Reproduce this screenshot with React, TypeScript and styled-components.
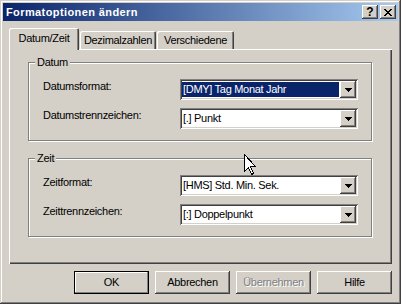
import styled, { createGlobalStyle } from "styled-components";

const GlobalStyle = createGlobalStyle`
  html, body {
    margin: 0;
    padding: 0;
    background: #d4d0c8;
  }
  body {
    font-family: "Liberation Sans", Arial, sans-serif;
    font-size: 11px;
    letter-spacing: -0.3px;
    color: #000;
  }
`;

const raised = `
  box-shadow: inset -1px -1px #404040, inset 1px 1px #fff,
    inset -2px -2px #808080, inset 2px 2px #d4d0c8;
`;

const Window = styled.div`
  position: relative;
  box-sizing: border-box;
  width: 401px;
  height: 304px;
  padding: 3px;
  background: #d4d0c8;
  box-shadow: inset -1px -1px #404040, inset 1px 1px #d4d0c8,
    inset -2px -2px #808080, inset 2px 2px #fff;
  display: flex;
  flex-direction: column;
`;

const TitleBar = styled.div`
  height: 18px;
  display: flex;
  align-items: center;
  padding: 0 2px 0 3px;
  background: linear-gradient(to right, #0a246a, #a6caf0);
  color: #fff;
`;

const Title = styled.div`
  flex: 1;
  font-weight: bold;
  font-size: 11px;
  letter-spacing: 0.4px;
  line-height: 18px;
`;

const CaptionButton = styled.div`
  box-sizing: border-box;
  width: 16px;
  height: 14px;
  margin-left: 2px;
  background: #d4d0c8;
  color: #000;
  display: flex;
  align-items: center;
  justify-content: center;
  font-weight: bold;
  font-size: 12px;
  letter-spacing: 0;
  line-height: 14px;
  ${raised}
`;

const Client = styled.div`
  flex: 1;
  display: flex;
  flex-direction: column;
  padding: 7px 6px 7px 6px;
`;

const TabStrip = styled.div`
  height: 21px;
  display: flex;
  align-items: flex-end;
`;

const Tab = styled.div<{ $active?: boolean; $width: number }>`
  position: relative;
  z-index: ${(p) => (p.$active ? 1 : 0)};
  box-sizing: border-box;
  width: ${(p) => p.$width}px;
  height: ${(p) => (p.$active ? 22 : 18)}px;
  margin-bottom: ${(p) => (p.$active ? -1 : 0)}px;
  margin-left: ${(p) => (p.$active ? 0 : 1)}px;
  background: #d4d0c8;
  border-radius: 2px 2px 0 0;
  box-shadow: inset 1px 1px #fff, inset -1px 0 #404040, inset -2px 0 #808080;
  display: flex;
  justify-content: center;
  padding-top: ${(p) => (p.$active ? 4 : 3)}px;
  line-height: 13px;
`;

const Panel = styled.div`
  box-sizing: border-box;
  height: 215px;
  padding: 13px 20px 0 19px;
  background: #d4d0c8;
  box-shadow: inset 1px 1px #fff, inset -1px -1px #404040,
    inset -2px -2px #808080;
  display: flex;
  flex-direction: column;
  gap: 17px;
`;

const GroupBox = styled.div`
  position: relative;
  box-sizing: border-box;
  height: 79px;
  border: 1px solid #808080;
  box-shadow: inset 1px 1px #fff, 1px 1px #fff;
  padding: 16px 13px 0 14px;
  display: flex;
  flex-direction: column;
  gap: 8px;
`;

const GroupCaption = styled.div`
  position: absolute;
  top: -7px;
  left: 6px;
  padding: 0 2px;
  background: #d4d0c8;
  line-height: 13px;
`;

const Row = styled.div`
  height: 21px;
  display: flex;
  justify-content: space-between;
  align-items: flex-start;
`;

const Label = styled.div`
  padding-top: 1px;
  line-height: 13px;
`;

const Combo = styled.div`
  box-sizing: border-box;
  width: 178px;
  height: 21px;
  padding: 2px;
  background: #fff;
  box-shadow: inset 1px 1px #808080, inset -1px -1px #fff,
    inset 2px 2px #404040, inset -2px -2px #d4d0c8;
  display: flex;
`;

const Value = styled.div<{ $selected?: boolean }>`
  flex: 1;
  margin: 1px 1px 1px 0;
  padding-left: 1px;
  line-height: 15px;
  white-space: nowrap;
  overflow: hidden;
  background: ${(p) => (p.$selected ? "#0a246a" : "transparent")};
  color: ${(p) => (p.$selected ? "#fff" : "#000")};
`;

const DropButton = styled.div`
  box-sizing: border-box;
  width: 16px;
  height: 17px;
  background: #d4d0c8;
  display: flex;
  align-items: center;
  justify-content: center;
  ${raised}
`;

const ButtonRow = styled.div`
  margin-top: 7px;
  display: flex;
  justify-content: flex-end;
  gap: 6px;
`;

const PushButton = styled.div<{ $default?: boolean; $disabled?: boolean }>`
  box-sizing: border-box;
  width: 75px;
  height: 23px;
  background: #d4d0c8;
  display: flex;
  align-items: center;
  justify-content: center;
  line-height: 13px;
  color: ${(p) => (p.$disabled ? "#808080" : "#000")};
  text-shadow: ${(p) => (p.$disabled ? "1px 1px 0 #fff" : "none")};
  box-shadow: ${(p) =>
    p.$default
      ? "inset 0 0 0 1px #000, inset -2px -2px #808080, inset 2px 2px #fff"
      : "inset -1px -1px #404040, inset 1px 1px #fff, inset -2px -2px #808080, inset 2px 2px #d4d0c8"};
`;

const Cursor = styled.svg`
  position: absolute;
  left: 244px;
  top: 154px;
`;

const closeRows = ["11000011", "01100110", "00111100", "00011000", "00111100", "01100110", "11000011"];

const CloseGlyph = () => (
  <svg width="8" height="7" viewBox="0 0 8 7" shapeRendering="crispEdges">
    {closeRows.map((row, y) =>
      row.split("").map((c, x) =>
        c === "1" ? <rect key={`${x}-${y}`} x={x} y={y} width="1" height="1" fill="#000" /> : null
      )
    )}
  </svg>
);

const Arrow = () => (
  <svg width="7" height="4" viewBox="0 0 7 4" shapeRendering="crispEdges">
    <path d="M0 0H7V1H6V2H5V3H4V4H3V3H2V2H1V1H0Z" fill="#000" />
  </svg>
);

type Field = { label: string; value: string; selected?: boolean };

const groups: { title: string; fields: Field[] }[] = [
  {
    title: "Datum",
    fields: [
      { label: "Datumsformat:", value: "[DMY] Tag Monat Jahr", selected: true },
      { label: "Datumstrennzeichen:", value: "[.] Punkt" },
    ],
  },
  {
    title: "Zeit",
    fields: [
      { label: "Zeitformat:", value: "[HMS] Std. Min. Sek." },
      { label: "Zeittrennzeichen:", value: "[:] Doppelpunkt" },
    ],
  },
];

const App = () => {
  return (
    <>
      <GlobalStyle />
      <Window>
        <TitleBar>
          <Title>Formatoptionen ändern</Title>
          <CaptionButton>?</CaptionButton>
          <CaptionButton>
            <CloseGlyph />
          </CaptionButton>
        </TitleBar>
        <Client>
          <TabStrip>
            <Tab $active $width={70}>Datum/Zeit</Tab>
            <Tab $width={76}>Dezimalzahlen</Tab>
            <Tab $width={77}>Verschiedene</Tab>
          </TabStrip>
          <Panel>
            {groups.map((g) => (
              <GroupBox key={g.title}>
                <GroupCaption>{g.title}</GroupCaption>
                {g.fields.map((f) => (
                  <Row key={f.label}>
                    <Label>{f.label}</Label>
                    <Combo>
                      <Value $selected={f.selected}>{f.value}</Value>
                      <DropButton>
                        <Arrow />
                      </DropButton>
                    </Combo>
                  </Row>
                ))}
              </GroupBox>
            ))}
          </Panel>
          <ButtonRow>
            <PushButton $default>OK</PushButton>
            <PushButton>Abbrechen</PushButton>
            <PushButton $disabled>Übernehmen</PushButton>
            <PushButton>Hilfe</PushButton>
          </ButtonRow>
        </Client>
        <Cursor width="13" height="21" viewBox="0 0 13 21" shapeRendering="crispEdges">
          <path
            d="M0.5 0.5V17.5L4.5 13.5L7.5 20.5L9.5 19.5L6.5 12.5H11.5Z"
            fill="#fff"
            stroke="#000"
            strokeWidth="1"
          />
        </Cursor>
      </Window>
    </>
  );
};

export default App;
